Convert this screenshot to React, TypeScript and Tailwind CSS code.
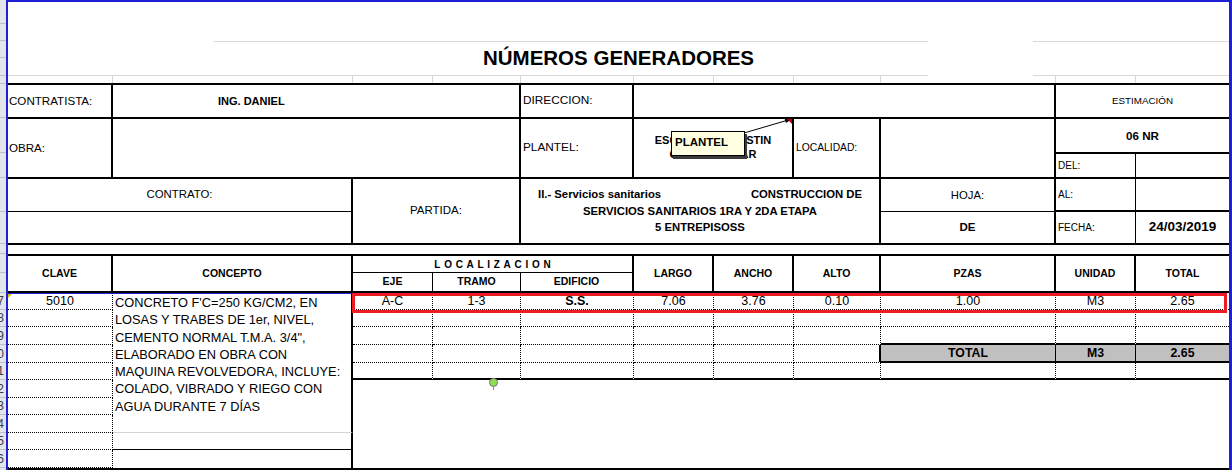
import React from 'react';

// Spreadsheet column grid (x: 8..1229)
const COLS =
  'grid grid-cols-[105px_240px_80px_88px_113px_80px_80px_87px_175px_80px_93px]';

const DOT = 'border-r border-b border-black [border-right-style:dotted] [border-bottom-style:dotted]';
const DOT_B = 'border-b border-black [border-bottom-style:dotted]';

type CellProps = { className?: string; children?: React.ReactNode };

const Cell: React.FC<CellProps> = ({ className = '', children }) => (
  <div className={`flex min-w-0 items-center whitespace-nowrap border-black ${className}`}>{children}</div>
);

// row header strip (only the last few px of the numbers show)
const rowHeads: [string, string][] = [
  ['h-[24px]', ''],
  ['h-[17px]', ''],
  ['h-[17px]', ''],
  ['h-[18px]', ''],
  ['h-[8px]', ''],
  ['h-[34px]', ''],
  ['h-[35px]', ''],
  ['h-[25px]', ''],
  ['h-[34px]', ''],
  ['h-[32px]', ''],
  ['h-[10px]', ''],
  ['h-[19px]', ''],
  ['h-[20px]', ''],
  ['h-[17px]', '17'],
  ['h-[17px]', '18'],
  ['h-[18px]', '19'],
  ['h-[18px]', '20'],
  ['h-[17px]', '21'],
  ['h-[18px]', '22'],
  ['h-[17px]', '23'],
  ['h-[18px]', '24'],
  ['h-[17px]', '25'],
  ['h-[18px]', '26'],
];

const concepto = [
  "CONCRETO F'C=250 KG/CM2, EN",
  'LOSAS Y TRABES DE 1er, NIVEL,',
  'CEMENTO NORMAL T.M.A. 3/4",',
  'ELABORADO EN OBRA CON',
  'MAQUINA REVOLVEDORA, INCLUYE:',
  'COLADO, VIBRADO Y RIEGO CON',
  'AGUA DURANTE 7 DÍAS',
];

const valores = ['A-C', '1-3', 'S.S.', '7.06', '3.76', '0.10', '1.00', 'M3', '2.65'];

const App: React.FC = () => {
  return (
    <div className="flex h-[470px] w-[1232px] overflow-hidden bg-white font-['Liberation_Sans',Arial,sans-serif] text-black">
      {/* Row headers */}
      <div className="flex w-[6px] flex-col bg-[#e2e6eb]">
        {rowHeads.map(([h, n], i) => (
          <div
            key={i}
            className={`${h} flex items-center justify-end overflow-hidden whitespace-nowrap border-b border-[#b9c0ca] pr-[2px] text-[12px] leading-none text-[#3a3a4a]`}
          >
            {n}
          </div>
        ))}
      </div>
      <div className="w-[2px] bg-[#1f1fd6]" />

      {/* Sheet */}
      <div className="flex w-[1221px] flex-col border-t-2 border-[#1f1fd6]">
        {/* Title */}
        <div className="h-[39px]" />
        <div className="flex h-px">
          <div className="w-[206px]" />
          <div className="w-[714px] bg-[#d9d9d9]" />
          <div className="w-[105px]" />
          <div className="flex-1 bg-[#d9d9d9]" />
        </div>
        <div className="flex h-[33px] items-center justify-center text-[20.5px] font-bold">NÚMEROS GENERADORES</div>
        <div className="flex h-px">
          <div className="w-[920px] bg-[#d9d9d9]" />
          <div className="w-[105px]" />
          <div className="flex-1 bg-[#d9d9d9]" />
        </div>
        <div className={`${COLS} h-[7px]`}>
          {Array.from({ length: 11 }).map((_, i) => (
            <div key={i} className={i < 10 ? 'border-r border-[#d9d9d9]' : ''} />
          ))}
        </div>

        {/* Header form */}
        <div className={`${COLS} relative grid-rows-[34px_35px_25px_33px_33px] border-t-2 border-black`}>
          <Cell className="border-r-2 border-b-2 pl-px text-[11.6px]">CONTRATISTA:</Cell>
          <Cell className="col-span-3 border-r-2 border-b-2 pl-[105px] text-[11px] font-bold">ING. DANIEL</Cell>
          <Cell className="border-r-2 border-b-2 pl-[2px] text-[11.8px]">DIRECCION:</Cell>
          <Cell className="col-span-4 border-r-2 border-b-2" />
          <Cell className="col-span-2 justify-center border-b-2 text-[9.8px]">ESTIMACIÓN</Cell>

          <Cell className="row-span-2 border-r-2 border-b-2 pl-px text-[11.6px]">OBRA:</Cell>
          <Cell className="col-span-3 row-span-2 border-r-2 border-b-2" />
          <Cell className="row-span-2 border-r-2 border-b-2 pl-[2px] text-[11.8px]">PLANTEL:</Cell>
          <div className="col-span-2 row-span-2 flex flex-col items-center justify-center whitespace-nowrap border-r-2 border-b-2 border-black pb-[3px] text-[11px] font-bold leading-[14px]">
            <span>ESCUELA J. AGUSTIN</span>
            <span>GARCIA OLIVAR</span>
          </div>
          <Cell className="row-span-2 border-r-2 border-b-2 pl-[2px] text-[10.3px]">LOCALIDAD:</Cell>
          <Cell className="row-span-2 border-r-2 border-b-2" />
          <Cell className="col-span-2 justify-center border-b-2 text-[11.6px] font-bold">06 NR</Cell>
          <Cell className="border-r border-b-2 pl-[2px] text-[10px]">DEL:</Cell>
          <Cell className="border-b-2" />

          <Cell className="col-span-2 justify-center border-r-2 border-b text-[11.4px]">CONTRATO:</Cell>
          <Cell className="col-span-2 row-span-2 justify-center border-r-2 border-b-2 text-[11.5px]">PARTIDA:</Cell>
          <div className="col-span-4 row-span-2 flex flex-col items-center justify-center whitespace-nowrap border-r-2 border-b-2 border-black text-[11.3px] font-bold leading-[16.5px]">
            <div className="flex w-[324px] justify-between">
              <span>II.- Servicios sanitarios</span>
              <span>CONSTRUCCION DE</span>
            </div>
            <span>SERVICIOS SANITARIOS 1RA Y 2DA ETAPA</span>
            <span>5 ENTREPISOSS</span>
          </div>
          <Cell className="justify-center border-r-2 border-b text-[11.3px]">HOJA:</Cell>
          <Cell className="border-r border-b-2 pl-[2px] text-[10px]">AL:</Cell>
          <Cell className="border-b-2" />
          <Cell className="col-span-2 border-r-2 border-b-2" />
          <Cell className="justify-center border-r-2 border-b-2 text-[11.5px] font-bold">DE</Cell>
          <Cell className="border-r border-b-2 pl-[2px] text-[10px]">FECHA:</Cell>
          <Cell className="justify-center border-b-2 text-[13.5px] font-bold">24/03/2019</Cell>

          {/* Comment on PLANTEL cell */}
          <svg className="absolute left-[736px] top-[28px]" width="60" height="24" viewBox="0 0 60 24">
            <line x1="0" y1="20" x2="46" y2="6.5" stroke="#000" strokeWidth="1" />
            <polygon points="48,6 41.9,10.1 40.5,5.3" fill="#000" />
            <polygon points="43,6 48,6 48,11" fill="#c00000" />
          </svg>
          <div className="absolute left-[663px] top-[46px] h-[25px] w-[74px] border border-black bg-[#ffffe1] pl-[3px] pt-[5px] text-[11.5px] font-bold leading-none shadow-[2px_3px_0_0_#3a3a3a]">
            PLANTEL
          </div>
        </div>

        <div className="h-[9px]" />

        {/* Table header */}
        <div className={`${COLS} grid-rows-[17px_20px] border-t-2 border-black text-[10.5px] font-bold`}>
          <Cell className="row-span-2 justify-center border-r-2 border-b-2">CLAVE</Cell>
          <Cell className="row-span-2 justify-center border-r-2 border-b-2">CONCEPTO</Cell>
          <Cell className="col-span-3 justify-center border-r-2 border-b pl-[3.7px] text-[10px] tracking-[3.7px]">
            LOCALIZACION
          </Cell>
          <Cell className="row-span-2 justify-center border-r-2 border-b-2">LARGO</Cell>
          <Cell className="row-span-2 justify-center border-r-2 border-b-2">ANCHO</Cell>
          <Cell className="row-span-2 justify-center border-r-2 border-b-2">ALTO</Cell>
          <Cell className="row-span-2 justify-center border-r-2 border-b-2">PZAS</Cell>
          <Cell className="row-span-2 justify-center border-r-2 border-b-2">UNIDAD</Cell>
          <Cell className="row-span-2 justify-center border-b-2">TOTAL</Cell>
          <Cell className="justify-center border-r border-b-2">EJE</Cell>
          <Cell className="justify-center border-r border-b-2">TRAMO</Cell>
          <Cell className="justify-center border-r-2 border-b-2">EDIFICIO</Cell>
        </div>

        {/* Data */}
        <div
          className={`${COLS} relative grid-rows-[17px_17px_18px_18px_17px_18px_17px_18px_17px_18px] border-b-2 border-black text-[12.5px]`}
        >
          {/* row 1 */}
          <Cell className={`relative justify-center border-t border-t-[#2222dd] ${DOT}`}>
            <span className="absolute left-0 top-0 border-t-[4px] border-r-[4px] border-t-[#d8c000] border-r-transparent" />
            5010
          </Cell>
          <div className="row-span-8 flex flex-col border-t border-r-2 border-b border-black border-t-[#2222dd] border-b-[#d4d4d4] pl-[2px] text-[12.8px] leading-[17.3px]">
            {concepto.map((l) => (
              <div key={l} className="whitespace-nowrap">
                {l}
              </div>
            ))}
          </div>
          {valores.map((v, i) => (
            <Cell
              key={i}
              className={`justify-center ${i === 8 ? DOT_B : DOT} ${v === 'S.S.' ? 'font-bold' : ''}`}
            >
              {v}
            </Cell>
          ))}

          {/* row 2 */}
          <Cell className={DOT} />
          {Array.from({ length: 9 }).map((_, i) => (
            <Cell key={i} className={i === 8 ? DOT_B : DOT} />
          ))}

          {/* row 3 */}
          <Cell className={DOT} />
          {Array.from({ length: 6 }).map((_, i) => (
            <Cell key={i} className={DOT} />
          ))}
          <Cell className="border-r border-b-2 [border-right-style:dotted]" />
          <Cell className="border-r border-b-2 [border-right-style:dotted]" />
          <Cell className="border-b-2" />

          {/* row 4 */}
          <Cell className={DOT} />
          {Array.from({ length: 5 }).map((_, i) => (
            <Cell key={i} className={DOT} />
          ))}
          <Cell className="border-r-2 border-b [border-bottom-style:dotted]" />
          <Cell className="justify-center border-r border-b-2 bg-[#c0c0c0] text-[12.3px] font-bold">TOTAL</Cell>
          <Cell className="justify-center border-r border-b-2 bg-[#c0c0c0] text-[12.3px] font-bold">M3</Cell>
          <Cell className="justify-center border-b-2 bg-[#c0c0c0] text-[12.3px] font-bold">2.65</Cell>

          {/* row 5 */}
          <Cell className={DOT} />
          {Array.from({ length: 9 }).map((_, i) => (
            <Cell key={i} className={i === 8 ? 'border-b-2' : 'border-r border-b-2 [border-right-style:dotted]'} />
          ))}

          {/* rows 6-10 */}
          <Cell className={DOT} />
          <div className="col-span-9 row-span-5" />
          <Cell className={DOT} />
          <Cell className={DOT} />
          <Cell className={DOT} />
          <Cell className="border-r-2 border-b border-[#d4d4d4] border-r-black" />
          <Cell className={DOT} />
          <Cell className="border-r-2" />

          {/* selection + shape handle */}
          <div className="absolute left-[344px] top-0 h-[20px] w-[875px] border-[3px] border-[#ed1c24]" />
          <div className="absolute left-[481px] top-[85px] h-[9px] w-[9px] rounded-full border border-[#7a7a7a] bg-[#8fe04d]" />
          <div className="absolute left-[485px] top-[94px] h-[3px] w-px bg-[#8a8a8a]" />
        </div>
      </div>

      <div className="w-[3px] bg-[#1f1fd6]" />
    </div>
  );
};

export default App;
